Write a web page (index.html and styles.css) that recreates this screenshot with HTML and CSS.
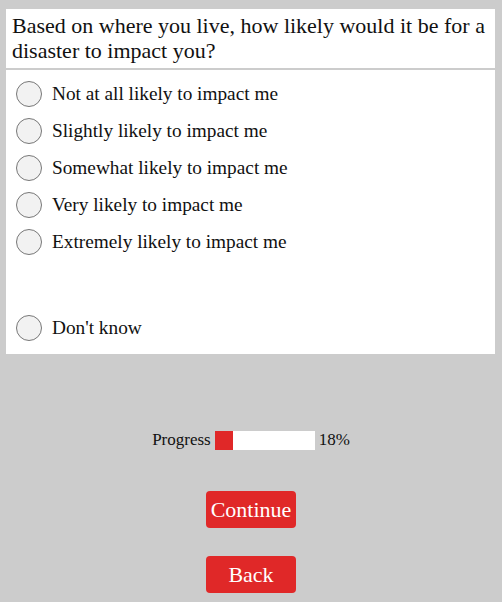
FILE: index.html
```html
<!DOCTYPE html>
<html>
<head>
<meta charset="utf-8">
<link rel="stylesheet" href="styles.css">
</head>
<body>
<div class="survey">
  <div class="question">Based on where you live, how likely would it be for a disaster to impact you?</div>
  <div class="options">
    <label class="option"><span class="radio"></span><span class="label">Not at all likely to impact me</span></label>
    <label class="option"><span class="radio"></span><span class="label">Slightly likely to impact me</span></label>
    <label class="option"><span class="radio"></span><span class="label">Somewhat likely to impact me</span></label>
    <label class="option"><span class="radio"></span><span class="label">Very likely to impact me</span></label>
    <label class="option"><span class="radio"></span><span class="label">Extremely likely to impact me</span></label>
    <div class="spacer"></div>
    <label class="option"><span class="radio"></span><span class="label">Don't know</span></label>
  </div>
</div>
<div class="footer">
  <div class="progress">
    <span class="progress-label">Progress</span>
    <span class="bar"><span class="fill" style="width:18%"></span></span>
    <span class="progress-value">18%</span>
  </div>
  <button class="btn">Continue</button>
  <button class="btn">Back</button>
</div>
</body>
</html>
```
FILE: styles.css
```css
html, body {
  margin: 0;
  padding: 0;
  background: #cccccc;
}
body {
  font-family: "Liberation Serif", "DejaVu Serif", serif;
  color: #111;
  padding-top: 9px;
}
.survey {
  margin-left: 6px;
  width: 489px;
}
.question {
  background: #fff;
  height: 59px;
  box-sizing: border-box;
  padding: 4px 6px 0 6px;
  font-size: 22px;
  line-height: 25px;
}
.options {
  margin-top: 2px;
  background: #fff;
  height: 284px;
  box-sizing: border-box;
  padding-top: 11px;
  padding-left: 10px;
  display: flex;
  flex-direction: column;
}
.option {
  display: flex;
  align-items: center;
  height: 26px;
  margin-bottom: 11px;
  font-size: 19.3px;
}
.radio {
  width: 24px;
  height: 24px;
  border: 1px solid #777;
  border-radius: 50%;
  background: #f2f2f2;
  flex: none;
}
.label {
  margin-left: 10px;
}
.spacer {
  height: 49px;
}
.footer {
  display: flex;
  flex-direction: column;
  align-items: center;
  padding-top: 76px;
}
.progress {
  display: flex;
  align-items: center;
  font-size: 17px;
  height: 20px;
}
.bar {
  width: 100px;
  height: 19px;
  background: #fff;
  margin: 0 4px;
  display: flex;
}
.fill {
  background: #e02828;
  height: 100%;
}
.btn {
  width: 90px;
  height: 37px;
  border: none;
  border-radius: 4px;
  background: #e02828;
  color: #fff;
  font-family: "Liberation Serif", "DejaVu Serif", serif;
  font-size: 22px;
  padding: 0;
  margin-top: 41px;
}
.btn + .btn {
  margin-top: 28px;
}
```
